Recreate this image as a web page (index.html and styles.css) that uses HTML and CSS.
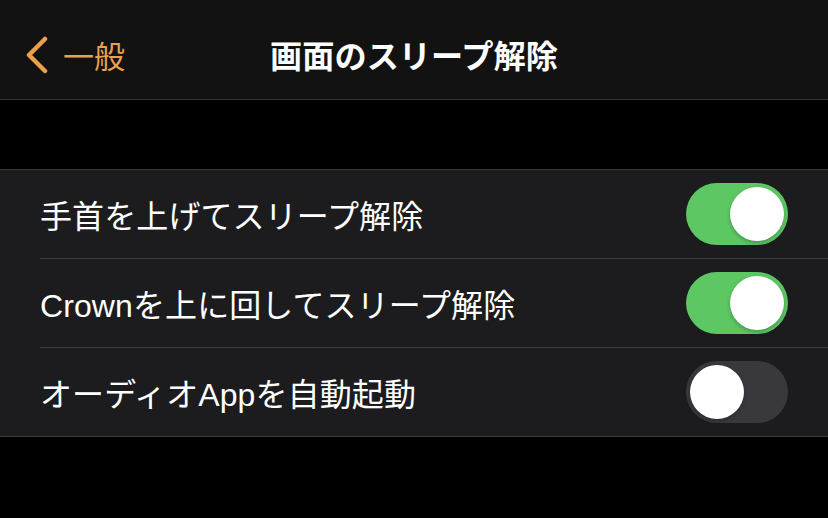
FILE: index.html
```html
<!DOCTYPE html>
<html lang="ja">
<head>
<meta charset="utf-8">
<link rel="stylesheet" href="styles.css">
</head>
<body>
<div class="screen">
  <header class="navbar">
    <div class="back">
      <svg class="chevron" width="26" height="38" viewBox="0 0 26 38"><path d="M21 3 L5 19 L21 35" fill="none" stroke="#e9a14c" stroke-width="4.5" stroke-linecap="round" stroke-linejoin="round"/></svg>
      <span class="back-label">一般</span>
    </div>
    <h1 class="title">画面のスリープ解除</h1>
  </header>
  <div class="spacer"></div>
  <section class="group">
    <div class="row">
      <span class="label">手首を上げてスリープ解除</span>
      <span class="toggle on"><span class="knob"></span></span>
    </div>
    <div class="row">
      <span class="label">Crownを上に回してスリープ解除</span>
      <span class="toggle on"><span class="knob"></span></span>
    </div>
    <div class="row">
      <span class="label">オーディオAppを自動起動</span>
      <span class="toggle off"><span class="knob"></span></span>
    </div>
  </section>
</div>
</body>
</html>
```
FILE: styles.css
```css
html, body {
  margin: 0;
  padding: 0;
  background: #000;
}
body {
  width: 828px;
  height: 518px;
  overflow: hidden;
  font-family: "Liberation Sans", "Noto Sans CJK JP", sans-serif;
  color: #fff;
}
.screen {
  display: flex;
  flex-direction: column;
}
.navbar {
  position: relative;
  height: 99px;
  background: #121212;
  border-bottom: 1px solid #343436;
  display: flex;
  align-items: center;
  justify-content: center;
}
.back {
  position: absolute;
  left: 24px;
  top: 36px;
  display: flex;
  align-items: center;
  gap: 13px;
}
.chevron {
  display: block;
}
.back-label {
  font-family: "Noto Sans CJK JP", sans-serif;
  font-size: 31px;
  color: #e9a14c;
  line-height: 38px;
}
.title {
  margin: 0;
  font-family: "Noto Sans CJK JP", sans-serif;
  font-size: 32.2px;
  font-weight: 700;
  line-height: 40px;
  margin-top: 8px;
}
.spacer {
  height: 69px;
}
.group {
  background: #1c1c1e;
  border-top: 1px solid #3a3a3c;
  border-bottom: 1px solid #3a3a3c;
  padding-left: 40px;
}
.row {
  height: 88px;
  display: flex;
  align-items: center;
  justify-content: space-between;
  padding-right: 40px;
  border-bottom: 1px solid #3a3a3c;
}
.row:last-child {
  border-bottom: none;
}
.label {
  font-size: 32px;
  font-weight: 400;
  letter-spacing: 0.1px;
}
.toggle {
  width: 102px;
  height: 62px;
  border-radius: 31px;
  display: flex;
  align-items: center;
  padding: 0 4px;
  box-sizing: border-box;
}
.toggle.on {
  background: #5dc764;
  justify-content: flex-end;
}
.toggle.off {
  background: #39393d;
  justify-content: flex-start;
}
.knob {
  width: 54px;
  height: 54px;
  border-radius: 50%;
  background: #fff;
  box-shadow: 0 2px 4px rgba(0,0,0,0.25);
}
```
